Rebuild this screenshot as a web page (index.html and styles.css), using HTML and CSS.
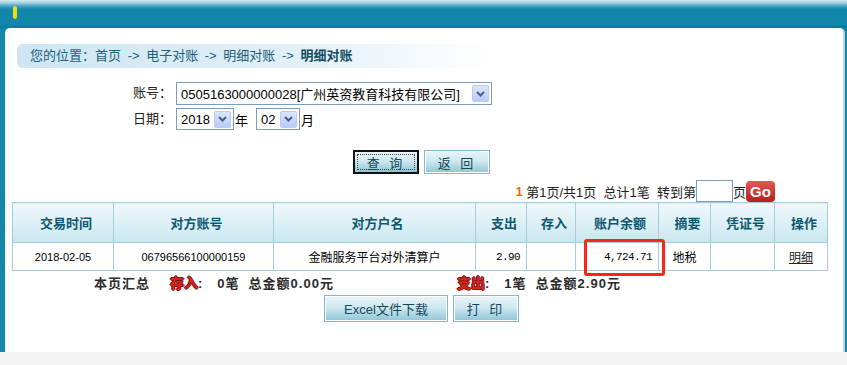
FILE: index.html
```html
<!DOCTYPE html>
<html lang="zh-CN">
<head>
    <meta charset="UTF-8">
    <title>明细对账</title>
    <link rel="stylesheet" href="styles.css">
</head>
<body>
    <div class="frame">
        <div class="topbar"><span class="mark"></span></div>
        <div class="panel">
            <div class="crumb">您的位置：首页 <span class="arrow">-&gt;</span> 电子对账 <span class="arrow">-&gt;</span> 明细对账 <span class="arrow">-&gt;</span> <b>明细对账</b></div>

            <div class="query-form">
                <label class="form-label">账号：</label>
                <div class="field">
                    <div class="fake-select acct">
                        <span class="select-text">0505163000000028[广州英资教育科技有限公司]</span>
                        <span class="select-arrow"><svg width="9" height="6" viewBox="0 0 9 6"><path d="M1 1 L4.5 4.5 L8 1" fill="none" stroke="#4b5f84" stroke-width="2"/></svg></span>
                    </div>
                </div>
                <label class="form-label">日期：</label>
                <div class="field">
                    <div class="fake-select year">
                        <span class="select-text">2018</span>
                        <span class="select-arrow"><svg width="9" height="6" viewBox="0 0 9 6"><path d="M1 1 L4.5 4.5 L8 1" fill="none" stroke="#4b5f84" stroke-width="2"/></svg></span>
                    </div>
                    <span class="unit">年</span>
                    <div class="fake-select month">
                        <span class="select-text">02</span>
                        <span class="select-arrow"><svg width="9" height="6" viewBox="0 0 9 6"><path d="M1 1 L4.5 4.5 L8 1" fill="none" stroke="#4b5f84" stroke-width="2"/></svg></span>
                    </div>
                    <span class="unit">月</span>
                </div>
            </div>

            <div class="actions top-actions">
                <button class="btn focused">查 询</button>
                <button class="btn">返 回</button>
            </div>

            <div class="pager">
                <span class="cur">1</span>&nbsp;第1页/共1页&nbsp;&nbsp;总计1笔&nbsp;&nbsp;转到第<input class="page-input" type="text"><span>页</span><span class="go">Go</span>
            </div>

            <div class="table-wrap">
                <table class="detail">
                    <colgroup>
                        <col style="width: 101px">
                        <col style="width: 160px">
                        <col style="width: 202px">
                        <col style="width: 51px">
                        <col style="width: 49px">
                        <col style="width: 83px">
                        <col style="width: 52px">
                        <col style="width: 64px">
                        <col style="width: 53px">
                    </colgroup>
                    <thead>
                        <tr>
                            <th>交易时间</th>
                            <th>对方账号</th>
                            <th>对方户名</th>
                            <th>支出</th>
                            <th>存入</th>
                            <th>账户余额</th>
                            <th>摘要</th>
                            <th>凭证号</th>
                            <th>操作</th>
                        </tr>
                    </thead>
                    <tbody>
                        <tr>
                            <td class="num">2018-02-05</td>
                            <td class="num">06796566100000159</td>
                            <td>金融服务平台对外清算户</td>
                            <td class="amount">2.90</td>
                            <td></td>
                            <td class="amount">4,724.71</td>
                            <td>地税</td>
                            <td></td>
                            <td><a class="link">明细</a></td>
                        </tr>
                    </tbody>
                </table>
                <div class="highlight"></div>
            </div>

            <div class="summary">
                <span class="sum-title">本页汇总</span>
                <span class="sum-group in"><span class="tag">存入</span>:&nbsp;&nbsp; 0笔&nbsp;&nbsp;总金额0.00元</span>
                <span class="sum-group"><span class="tag">支出</span>:&nbsp;&nbsp; 1笔&nbsp;&nbsp;总金额2.90元</span>
            </div>

            <div class="actions bottom-actions">
                <button class="btn wide">Excel文件下载</button>
                <button class="btn">打 印</button>
            </div>
        </div>
    </div>
</body>
</html>
```

FILE: styles.css
```css
body {
    margin: 0;
    background-color: #f3f3f3;
    font-family: "Liberation Sans", "Noto Sans CJK SC", sans-serif;
    font-size: 12px;
    color: #000;
}

.frame {
    height: 352px;
    display: flex;
    flex-direction: column;
    padding: 0 2px 0 5px;
    box-sizing: border-box;
    background: linear-gradient(to bottom, #d3eaf1 0, #9fd0de 3px, #4aa4c2 6px, #1386aa 9px, #1287ab 25px, #0c7497 27px, #1386aa 28px);
}

.topbar {
    height: 28px;
    padding: 6px 0 0 8px;
    box-sizing: border-box;
}

.mark {
    display: block;
    width: 4px;
    height: 13px;
    border-radius: 2px;
    background-color: #f4da12;
}

.panel {
    flex: 1;
    background-color: #fff;
    border-radius: 5px 5px 0 0;
    border-right: 2px solid #b9d8e2;
}

.crumb {
    margin: 16px 0 0 12px;
    width: 458px;
    height: 24px;
    line-height: 24px;
    padding-left: 13px;
    border-radius: 6px;
    font-size: 13px;
    color: #1d5f78;
    background: linear-gradient(to right, #cde5f3 0, #e2f0f8 60%, #fff 100%);
}

.crumb .arrow {
    margin: 0 3px;
}

.crumb b {
    color: #124d63;
}

.query-form {
    margin-top: 14px;
    display: grid;
    grid-template-columns: 167px auto;
    column-gap: 4px;
    row-gap: 3px;
}

.form-label {
    text-align: right;
    line-height: 22px;
    font-size: 13px;
    color: #222;
}

.field {
    display: flex;
    align-items: center;
}

.fake-select {
    display: flex;
    align-items: center;
    justify-content: space-between;
    height: 23px;
    box-sizing: border-box;
    border: 1px solid #7f9db9;
    padding: 0 2px 0 4px;
    background-color: #fff;
    font-size: 13px;
}

.fake-select.acct {
    width: 316px;
}

.fake-select.year {
    width: 58px;
    height: 22px;
}

.fake-select.month {
    width: 44px;
    height: 22px;
    margin-left: 8px;
}

.select-text {
    white-space: nowrap;
}

.select-arrow {
    display: flex;
    align-items: center;
    justify-content: center;
    width: 17px;
    height: 17px;
    box-sizing: border-box;
    border: 1px solid #b9cbf3;
    border-radius: 2px;
    background: linear-gradient(to bottom, #dbe6ff, #b8cbf7);
}

.unit {
    font-size: 13px;
    margin-left: 1px;
}

.actions {
    display: flex;
    justify-content: center;
    gap: 5px;
    padding-right: 5px;
}

.top-actions {
    margin-top: 20px;
}

.bottom-actions {
    margin-top: 2px;
}

.btn {
    width: 66px;
    height: 24px;
    padding: 0;
    border: 1px solid #7cbdd1;
    box-shadow: inset 0 0 0 1px #fff;
    background: linear-gradient(to bottom, #e9f5f9 0, #cfe8f0 45%, #8ec5d6 100%);
    font-family: "Liberation Sans", "Noto Sans CJK SC", sans-serif;
    font-size: 13px;
    color: #16485a;
    letter-spacing: 3px;
}

.btn.focused {
    border: 2px solid #111;
    box-shadow: none;
    outline: 1px dotted #444;
    outline-offset: -5px;
}

.btn.wide {
    width: 124px;
    letter-spacing: 0;
}

.bottom-actions .btn {
    height: 27px;
}

.pager {
    margin-top: 6px;
    height: 22px;
    display: flex;
    align-items: center;
    justify-content: flex-end;
    padding-right: 68px;
    font-size: 13px;
    color: #222;
}

.pager .cur {
    color: #f26a10;
    font-weight: bold;
}

.page-input {
    width: 37px;
    height: 22px;
    box-sizing: border-box;
    border: 1px solid #7f9db9;
    padding: 0;
    margin: 0;
}

.go {
    width: 29px;
    height: 21px;
    line-height: 21px;
    text-align: center;
    border-radius: 4px;
    background: linear-gradient(to bottom, #e55a52, #b81d1d);
    color: #fff;
    font-weight: bold;
    font-size: 15px;
}

.table-wrap {
    position: relative;
    margin-left: 7px;
    width: 815px;
}

.detail {
    width: 815px;
    table-layout: fixed;
    border-collapse: collapse;
}

.detail th,
.detail td {
    border: 1px solid #a5cddb;
    text-align: center;
    padding: 0;
}

.detail th {
    height: 39px;
    padding-left: 6px;
    font-size: 13px;
    font-weight: bold;
    color: #0d5870;
    background: linear-gradient(to bottom, #eff8fb 0, #dcf0f5 50%, #c9e6ee 100%);
}

.detail td {
    height: 27px;
    font-size: 12px;
}

.detail td.num {
    font-size: 11px;
}

.detail td.amount {
    text-align: right;
    padding-right: 6px;
    font-family: "Liberation Mono", monospace;
    font-size: 11px;
    letter-spacing: -0.6px;
}

.link {
    color: #222;
    text-decoration: underline;
}

.highlight {
    position: absolute;
    left: 572px;
    top: 37px;
    width: 75px;
    height: 31px;
    border: 3px solid #ff2418;
    border-radius: 3px;
}

.summary {
    height: 22px;
    display: flex;
    align-items: center;
    padding-left: 89px;
    font-size: 13px;
    font-weight: bold;
    color: #2b2b2b;
}

.sum-title {
    width: 76px;
    letter-spacing: 1px;
}

.sum-group {
    letter-spacing: 1px;
}

.sum-group.in {
    width: 287px;
}

.tag {
    color: #d8261d;
    font-size: 14px;
    letter-spacing: 0;
    text-shadow: 1px 0 #7d1212, -1px 0 #7d1212, 0 1px #7d1212, 0 -1px #7d1212;
}
```
